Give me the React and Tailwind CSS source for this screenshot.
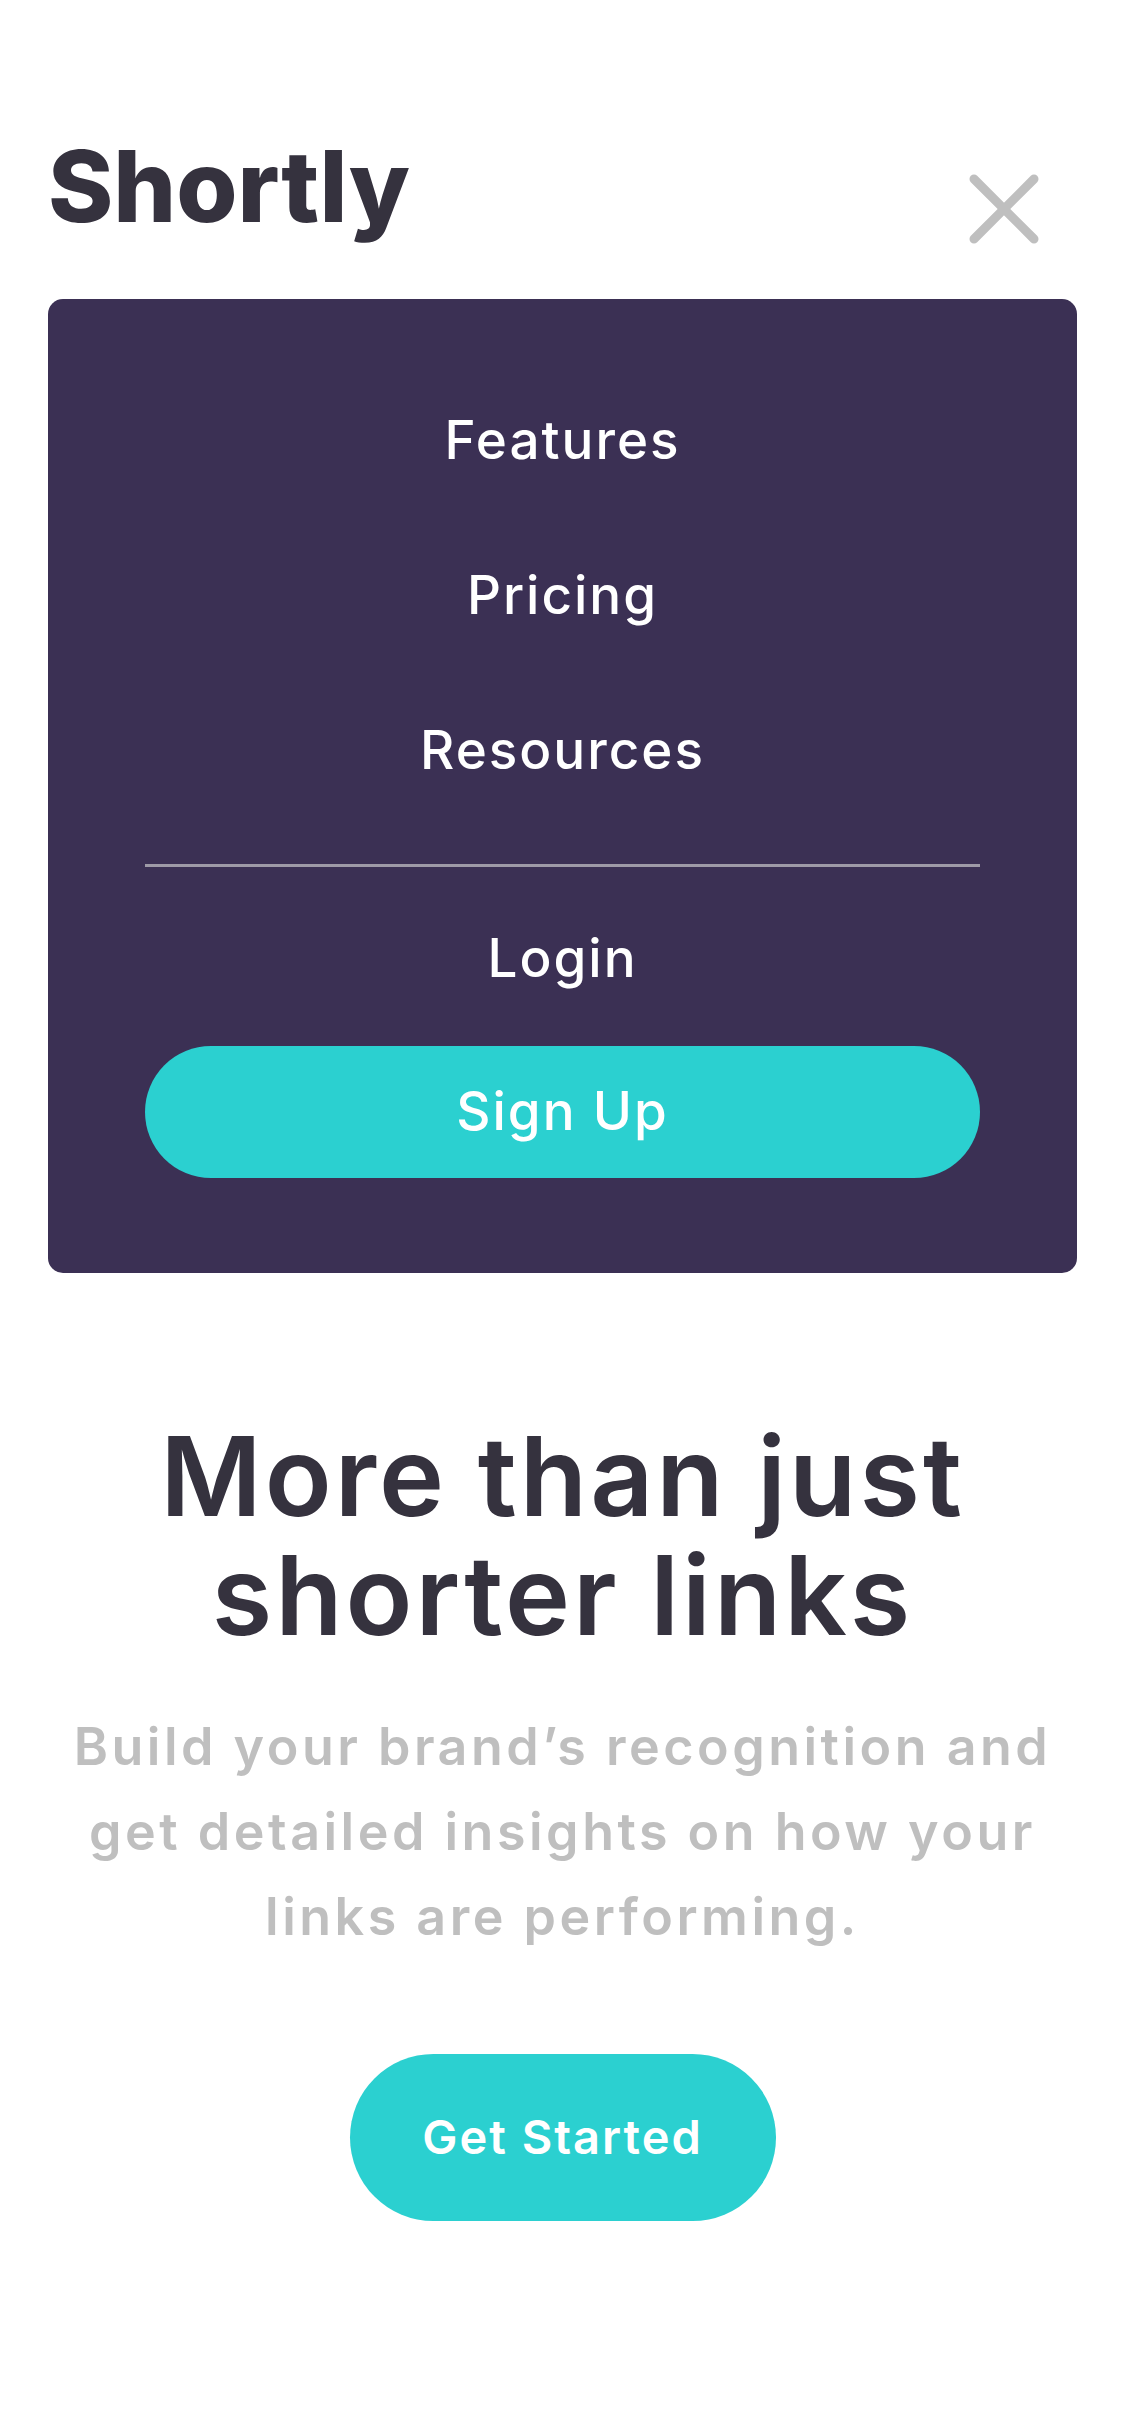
import React from 'react';

const navLinks = ['Features', 'Pricing', 'Resources'];

const CloseIcon = () => (
  <svg width="70" height="70" viewBox="0 0 70 70" fill="none" aria-hidden="true">
    <line x1="5" y1="5" x2="65" y2="65" stroke="#BFBFBF" strokeWidth="9" strokeLinecap="round" />
    <line x1="65" y1="5" x2="5" y2="65" stroke="#BFBFBF" strokeWidth="9" strokeLinecap="round" />
  </svg>
);

const App = () => {
  return (
    <div className="min-h-[2436px] w-full bg-white font-['Inter','Liberation_Sans',sans-serif] antialiased">
      {/* Header */}
      <header className="flex h-[299px] items-start justify-between px-[48px] pt-[137px]">
        <span className="text-[99px] font-extrabold leading-none text-[#35323E]">
          Shortly
        </span>
        <button className="mr-[38px] mt-[37px]" aria-label="Close menu">
          <CloseIcon />
        </button>
      </header>

      {/* Mobile menu */}
      <nav className="mx-[48px] flex flex-col items-center rounded-[15px] bg-[#3B3054] px-[97px] pb-[95px] pt-[101px]">
        <ul className="flex flex-col items-center gap-[75px]">
          {navLinks.map((link) => (
            <li key={link}>
              <a href="#" className="block text-[53px] font-medium leading-[80px] tracking-[2px] text-white">
                {link}
              </a>
            </li>
          ))}
        </ul>
        <div className="mt-[74px] h-[3px] w-full bg-[#9E9AA7]" />
        <a href="#" className="mt-[51px] block text-[53px] font-medium leading-[80px] tracking-[2px] text-white">
          Login
        </a>
        <button className="mt-[48px] flex h-[132px] w-full items-center justify-center rounded-full bg-[#2BD0D0] text-[53px] font-medium tracking-[2px] text-white">
          Sign Up
        </button>
      </nav>

      {/* Hero */}
      <section className="flex flex-col items-center px-[30px] pt-[144px] text-center">
        <h1 className="text-[110px] font-semibold leading-[119px] tracking-[3px] text-[#35323E]">
          More than just
          <br />
          shorter links
        </h1>
        <p className="mt-[49px] text-[52px] font-semibold leading-[85px] tracking-[3.5px] text-[#BFBFBF]">
          Build your brand’s recognition and
          <br />
          get detailed insights on how your
          <br />
          links are performing.
        </p>
        <button className="mt-[95px] flex h-[167px] w-[426px] items-center justify-center rounded-full bg-[#2BD0D0] text-[47px] font-semibold tracking-[2px] text-white">
          Get Started
        </button>
      </section>
    </div>
  );
};

export default App;
